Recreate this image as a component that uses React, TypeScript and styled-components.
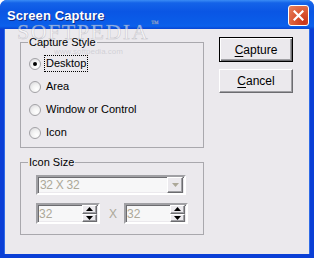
import React from 'react';
import styled, { createGlobalStyle } from 'styled-components';

const GlobalStyle = createGlobalStyle`
    html, body {
        margin: 0;
        padding: 0;
        background: #ffffff;
    }
`;

const styles = ['Desktop', 'Area', 'Window or Control', 'Icon'];

const CloseIcon = () => (
    <svg width="11" height="11" viewBox="0 0 11 11">
        <path d="M1.5 1.5 L9.5 9.5 M9.5 1.5 L1.5 9.5" stroke="#ffffff" strokeWidth="2.2" strokeLinecap="square" />
    </svg>
);

const Arrow = ({ up, color }: { up?: boolean; color: string }) => (
    <svg width="7" height="4" viewBox="0 0 7 4">
        <path d={up ? 'M0 4 L3.5 0 L7 4 Z' : 'M0 0 L7 0 L3.5 4 Z'} fill={color} />
    </svg>
);

const Spinner = ({ value }: { value: string }) => (
    <SpinBox>
        <SpinText>{value}</SpinText>
        <SpinButtons>
            <SpinButton>
                <Arrow up color="#000000" />
            </SpinButton>
            <SpinButton>
                <Arrow color="#000000" />
            </SpinButton>
        </SpinButtons>
    </SpinBox>
);

const App: React.FC = () => {
    return (
        <Window>
            <GlobalStyle />
            <TitleBar>
                <Title>Screen Capture</Title>
                <CloseButton>
                    <CloseIcon />
                </CloseButton>
            </TitleBar>
            <Body>
                <LeftColumn>
                    <Group>
                        <Legend>Capture Style</Legend>
                        <RadioList>
                            {styles.map((s, i) => (
                                <RadioRow key={s}>
                                    <RadioCircle checked={i === 0} />
                                    <RadioLabel focused={i === 0}>{s}</RadioLabel>
                                </RadioRow>
                            ))}
                        </RadioList>
                    </Group>
                    <Group>
                        <Legend>Icon Size</Legend>
                        <SizeArea>
                            <Combo>
                                <ComboText>32 X 32</ComboText>
                                <ComboButton>
                                    <Arrow color="#aca899" />
                                </ComboButton>
                            </Combo>
                            <SpinRow>
                                <Spinner value="32" />
                                <Times>X</Times>
                                <Spinner value="32" />
                            </SpinRow>
                        </SizeArea>
                    </Group>
                </LeftColumn>
                <ButtonColumn>
                    <PushButton isDefault>
                        <u>C</u>apture
                    </PushButton>
                    <PushButton>
                        <u>C</u>ancel
                    </PushButton>
                </ButtonColumn>
            </Body>
            <Watermark>
                SOFTPEDIA<Tm>™</Tm>
            </Watermark>
            <WatermarkUrl>www.softpedia.com</WatermarkUrl>
        </Window>
    );
};

const Window = styled.div`
    position: relative;
    width: 314px;
    height: 258px;
    display: flex;
    flex-direction: column;
    border-radius: 7px 7px 0 0;
    overflow: hidden;
    background: #0a3fd6;
    font-family: 'Liberation Sans', Arial, sans-serif;
    font-size: 11px;
    color: #000000;
`;

const TitleBar = styled.div`
    height: 29px;
    flex: none;
    display: flex;
    align-items: center;
    justify-content: space-between;
    padding: 0 5px 0 7px;
    box-sizing: border-box;
    background: linear-gradient(
        to bottom,
        #3a8cf5 0%,
        #1463e8 10%,
        #0a56e4 40%,
        #0a5de9 80%,
        #0b61ec 90%,
        #0845d4 100%
    );
`;

const Title = styled.span`
    color: #ffffff;
    font-size: 13px;
    font-weight: bold;
    letter-spacing: 0.1px;
    text-shadow: 1px 1px #0f2d8a;
    margin-top: 1px;
`;

const CloseButton = styled.div`
    width: 21px;
    height: 21px;
    box-sizing: border-box;
    border: 1px solid #ffffff;
    border-radius: 3px;
    display: flex;
    align-items: center;
    justify-content: center;
    background: radial-gradient(circle at 80% 85%, #c9341a 0%, #d9532f 40%, #e8825e 100%);
    margin-top: 1px;
`;

const Body = styled.div`
    flex: 1;
    display: flex;
    gap: 15px;
    margin: 0 4px 4px;
    padding: 7px 17px 0 16px;
    background: #ebe9ed;
    box-shadow: inset 1px 0 #2e6ae8, inset -1px 0 #2e6ae8;
`;

const LeftColumn = styled.div`
    width: 184px;
    display: flex;
    flex-direction: column;
    gap: 8px;
`;

const Group = styled.fieldset`
    margin: 0;
    padding: 0;
    border: 1px solid #a9a8ad;
    border-radius: 0;
`;

const Legend = styled.legend`
    margin-left: 7px;
    padding: 0 1px;
    line-height: 13px;
`;

const RadioList = styled.div`
    display: flex;
    flex-direction: column;
    padding: 3px 0 3px 8px;
`;

const RadioRow = styled.div`
    height: 23px;
    display: flex;
    align-items: center;
`;

const RadioCircle = styled.span<{ checked?: boolean }>`
    position: relative;
    width: 12px;
    height: 12px;
    box-sizing: border-box;
    border-radius: 50%;
    border: 1px solid #a3a2a6;
    background: radial-gradient(circle at 65% 70%, #ffffff 0%, #f2f2f2 45%, #d3d2d6 100%);
    margin-right: 3px;
    &::after {
        content: '';
        display: ${(p) => (p.checked ? 'block' : 'none')};
        position: absolute;
        left: 3px;
        top: 3px;
        width: 4px;
        height: 4px;
        border-radius: 50%;
        background: #000000;
    }
`;

const RadioLabel = styled.span<{ focused?: boolean }>`
    padding: 1px 1px;
    line-height: 13px;
    border: 1px dotted ${(p) => (p.focused ? '#000000' : 'transparent')};
`;

const SizeArea = styled.div`
    display: flex;
    flex-direction: column;
    gap: 8px;
    padding: 6px 0 10px 15px;
`;

const sunken = `
    box-sizing: border-box;
    border-style: solid;
    border-width: 2px;
    border-color: #a0a0a4 #ffffff #ffffff #a0a0a4;
    box-shadow: inset 1px 1px #6c6c70, inset -1px -1px #ebe9ed;
    background: #f7f7f8;
`;

const Combo = styled.div`
    ${sunken}
    width: 150px;
    height: 20px;
    display: flex;
    align-items: center;
    justify-content: space-between;
    padding-right: 1px;
`;

const ComboText = styled.span`
    color: #aca899;
    padding-left: 2px;
    font-size: 12px;
    letter-spacing: -0.3px;
`;

const raised = `
    box-sizing: border-box;
    background: #ebe9ed;
    border-style: solid;
    border-width: 1px;
    border-color: #ffffff #6c6c70 #6c6c70 #ffffff;
    box-shadow: inset -1px -1px #a0a0a4;
`;

const ComboButton = styled.div`
    ${raised}
    width: 16px;
    height: 16px;
    display: flex;
    align-items: center;
    justify-content: center;
`;

const SpinRow = styled.div`
    display: flex;
    align-items: center;
    gap: 9px;
`;

const SpinBox = styled.div`
    ${sunken}
    width: 64px;
    height: 21px;
    display: flex;
    align-items: center;
    justify-content: space-between;
    padding-right: 1px;
`;

const SpinText = styled.span`
    color: #aca899;
    font-size: 12px;
    padding-left: 1px;
`;

const SpinButtons = styled.div`
    display: flex;
    flex-direction: column;
    height: 17px;
`;

const SpinButton = styled.div`
    ${raised}
    width: 15px;
    flex: 1;
    display: flex;
    align-items: center;
    justify-content: center;
`;

const Times = styled.span`
    color: #aca899;
    font-size: 12px;
    width: 6px;
    text-align: center;
`;

const ButtonColumn = styled.div`
    width: 74px;
    display: flex;
    flex-direction: column;
    gap: 7px;
    padding-top: 1px;
`;

const PushButton = styled.div<{ isDefault?: boolean }>`
    box-sizing: border-box;
    height: ${(p) => (p.isDefault ? '25px' : '24px')};
    display: flex;
    align-items: center;
    justify-content: center;
    background: #ebe9ed;
    font-size: 12px;
    border: 1px solid ${(p) => (p.isDefault ? '#000000' : 'transparent')};
    box-shadow: ${(p) =>
        p.isDefault
            ? 'inset 1px 1px #ffffff, inset -1px -1px #6c6c70, inset -2px -2px #a0a0a4'
            : 'inset 1px 1px #ffffff, inset -1px -1px #6c6c70, inset -2px -2px #a0a0a4'};
    ${(p) =>
        p.isDefault
            ? ''
            : `border-color: #ffffff #6c6c70 #6c6c70 #ffffff;
               box-shadow: inset -1px -1px #a0a0a4;`}
    u {
        text-decoration: underline;
        text-underline-offset: 2px;
    }
`;

const Watermark = styled.div`
    position: absolute;
    left: 17px;
    top: 19px;
    font-family: 'Liberation Serif', 'Times New Roman', serif;
    font-size: 22px;
    letter-spacing: 1.5px;
    color: rgba(255, 255, 255, 0.55);
    -webkit-text-stroke: 0.6px rgba(150, 150, 160, 0.45);
    pointer-events: none;
`;

const Tm = styled.span`
    font-size: 8px;
    vertical-align: top;
    margin-left: 2px;
    letter-spacing: 0;
`;

const WatermarkUrl = styled.div`
    position: absolute;
    left: 54px;
    top: 47px;
    font-size: 8px;
    color: rgba(160, 160, 170, 0.35);
    pointer-events: none;
`;

export default App;
